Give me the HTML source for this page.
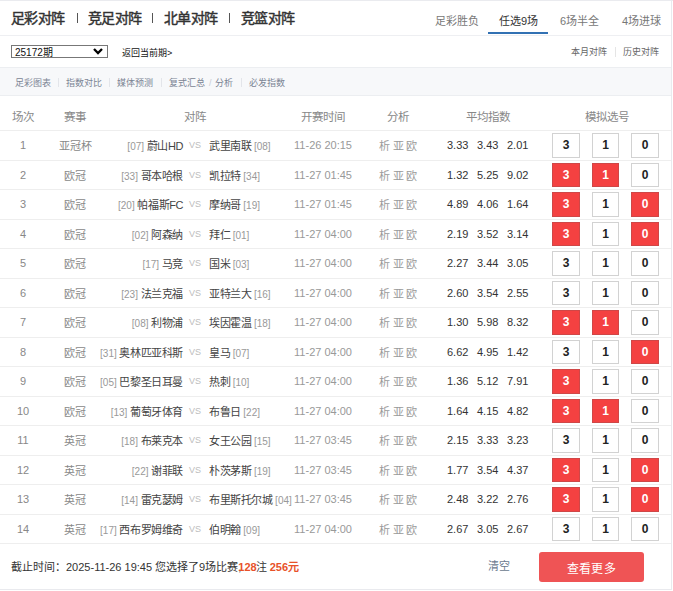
<!DOCTYPE html><html lang="zh-CN"><head><meta charset="utf-8"><style>
*{margin:0;padding:0;box-sizing:border-box}
html,body{width:673px;height:591px;overflow:hidden;background:#fff}
body{position:relative;font-family:"Liberation Sans",sans-serif;color:#333}
.a{position:absolute;white-space:nowrap}
.hl{position:absolute;left:0;width:672px;height:1px;background:#eeeeee}
.nav{font-size:14px;font-weight:normal;letter-spacing:-0.6px;-webkit-text-stroke:0.45px #333;color:#333;top:9px;line-height:18px}
.sep{position:absolute;width:1px;background:#555}
.tab{font-size:11px;color:#666;top:14px;line-height:14px}
.sub{font-size:9px;color:#7b8494;top:76.5px;line-height:13px}
.ss{position:absolute;top:78px;width:1px;height:9px;background:#e3e5ea}
.th{font-size:11.5px;color:#888;top:109.5px;line-height:15px;text-align:center;width:80px}
.c{text-align:center}
.td{font-size:11px;color:#888;line-height:14px}
.team{font-size:11px;letter-spacing:-0.4px;color:#444;line-height:14px}
.rk{font-size:10px;color:#999;letter-spacing:0}
.vs{font-size:9px;color:#bdbdbd;line-height:14px}
.tm{font-size:11px;color:#999;line-height:14px}
.xy{font-size:11px;color:#999;line-height:14px;letter-spacing:2.6px}
.od{font-size:11px;color:#333;line-height:14px}
.bx{position:absolute;border:1px solid #d2d2d2;background:#fff;font-size:12px;font-weight:bold;color:#222;text-align:center}
.bx.on{background:#f44141;border-color:#cf4747;color:#fff}
</style></head><body>
<div class="a" style="left:0;top:0;width:673px;height:1px;background:#eaebef"></div>
<div class="a nav" style="left:11px">足彩对阵</div>
<div class="a nav" style="left:88px">竞足对阵</div>
<div class="a nav" style="left:164px">北单对阵</div>
<div class="a nav" style="left:241px">竞篮对阵</div>
<div class="sep" style="left:77px;top:13px;height:10px"></div>
<div class="sep" style="left:152px;top:13px;height:10px"></div>
<div class="sep" style="left:229px;top:13px;height:10px"></div>
<div class="a tab" style="left:435px;color:#777">足彩胜负</div>
<div class="a tab" style="left:499px;color:#333">任选9场</div>
<div class="a tab" style="left:560px;color:#777">6场半全</div>
<div class="a tab" style="left:622px;color:#777">4场进球</div>
<div class="a" style="left:488px;top:32px;width:60px;height:2px;background:#3271b3"></div>
<div class="hl" style="top:35px;background:#eeeff2"></div>
<div class="a" style="left:11px;top:45px;width:97px;height:13px;border:1px solid #777;background:#fff"></div>
<div class="a" style="left:15px;top:45.5px;font-size:10px;line-height:13px;color:#111">25172期</div>
<svg class="a" style="left:93px;top:48px" width="10" height="7" viewBox="0 0 10 7"><path d="M1 1 L5 5 L9 1" fill="none" stroke="#000" stroke-width="2.3"/></svg>
<div class="a" style="left:122px;top:47px;font-size:9px;line-height:13px;color:#111">返回当前期&gt;</div>
<div class="a" style="left:571px;top:46px;font-size:9px;line-height:13px;color:#666">本月对阵</div>
<div class="a" style="left:615px;top:47px;width:1px;height:10px;background:#e5e5e5"></div>
<div class="a" style="left:623px;top:46px;font-size:9px;line-height:13px;color:#666">历史对阵</div>
<div class="a" style="left:0;top:67px;width:672px;height:29px;background:#f7f8fa;border-top:1px solid #eceef1;border-bottom:1px solid #eceef1"></div>
<div class="a sub" style="left:15px">足彩图表</div>
<div class="a sub" style="left:66px">指数对比</div>
<div class="a sub" style="left:117px">媒体预测</div>
<div class="a sub" style="left:169px">复式汇总</div>
<div class="a sub" style="left:215px">分析</div>
<div class="a sub" style="left:249px">必发指数</div>
<div class="ss" style="left:58px"></div>
<div class="ss" style="left:109px"></div>
<div class="ss" style="left:161px"></div>
<div class="ss" style="left:241px"></div>
<div class="a sub" style="left:209px;color:#c9cdd4">/</div>
<div class="a th" style="left:-17px">场次</div>
<div class="a th" style="left:35px">赛事</div>
<div class="a th" style="left:155px">对阵</div>
<div class="a th" style="left:283px">开赛时间</div>
<div class="a th" style="left:358px">分析</div>
<div class="a th" style="left:447.5px">平均指数</div>
<div class="a th" style="left:566.5px">模拟选号</div>
<div class="hl" style="top:130px"></div>
<div class="a td c" style="left:3px;width:40px;top:138.0px">1</div>
<div class="a td c" style="left:35px;width:80px;top:139.0px">亚冠杯</div>
<div class="a team" style="right:490px;top:139.0px;text-align:right"><span class="rk">[07]</span> 蔚山HD</div>
<div class="a vs c" style="left:185px;width:20px;top:138.0px">VS</div>
<div class="a team" style="left:209px;top:139.0px">武里南联<span class="rk" style="margin-left:2.5px">[08]</span></div>
<div class="a tm c" style="left:283px;width:80px;top:138.0px">11-26 20:15</div>
<div class="a xy" style="left:379px;top:139.0px">析亚欧</div>
<div class="a od" style="left:447px;top:138.0px">3.33</div>
<div class="a od" style="left:477px;top:138.0px">3.43</div>
<div class="a od" style="left:507px;top:138.0px">2.01</div>
<div class="bx" style="left:552px;top:133px;width:28px;height:25px;line-height:23px">3</div>
<div class="bx" style="left:592px;top:133px;width:27px;height:25px;line-height:23px">1</div>
<div class="bx" style="left:631px;top:133px;width:28px;height:25px;line-height:23px">0</div>
<div class="hl" style="top:160px"></div>
<div class="a td c" style="left:3px;width:40px;top:167.5px">2</div>
<div class="a td c" style="left:35px;width:80px;top:168.5px">欧冠</div>
<div class="a team" style="right:490px;top:168.5px;text-align:right"><span class="rk">[33]</span> 哥本哈根</div>
<div class="a vs c" style="left:185px;width:20px;top:167.5px">VS</div>
<div class="a team" style="left:209px;top:168.5px">凯拉特<span class="rk" style="margin-left:2.5px">[34]</span></div>
<div class="a tm c" style="left:283px;width:80px;top:167.5px">11-27 01:45</div>
<div class="a xy" style="left:379px;top:168.5px">析亚欧</div>
<div class="a od" style="left:447px;top:167.5px">1.32</div>
<div class="a od" style="left:477px;top:167.5px">5.25</div>
<div class="a od" style="left:507px;top:167.5px">9.02</div>
<div class="bx on" style="left:552px;top:163px;width:28px;height:24px;line-height:22px">3</div>
<div class="bx on" style="left:592px;top:163px;width:27px;height:24px;line-height:22px">1</div>
<div class="bx" style="left:631px;top:163px;width:28px;height:24px;line-height:22px">0</div>
<div class="hl" style="top:189px"></div>
<div class="a td c" style="left:3px;width:40px;top:197.0px">3</div>
<div class="a td c" style="left:35px;width:80px;top:198.0px">欧冠</div>
<div class="a team" style="right:490px;top:198.0px;text-align:right"><span class="rk">[20]</span> 帕福斯FC</div>
<div class="a vs c" style="left:185px;width:20px;top:197.0px">VS</div>
<div class="a team" style="left:209px;top:198.0px">摩纳哥<span class="rk" style="margin-left:2.5px">[19]</span></div>
<div class="a tm c" style="left:283px;width:80px;top:197.0px">11-27 01:45</div>
<div class="a xy" style="left:379px;top:198.0px">析亚欧</div>
<div class="a od" style="left:447px;top:197.0px">4.89</div>
<div class="a od" style="left:477px;top:197.0px">4.06</div>
<div class="a od" style="left:507px;top:197.0px">1.64</div>
<div class="bx on" style="left:552px;top:192px;width:28px;height:25px;line-height:23px">3</div>
<div class="bx" style="left:592px;top:192px;width:27px;height:25px;line-height:23px">1</div>
<div class="bx on" style="left:631px;top:192px;width:28px;height:25px;line-height:23px">0</div>
<div class="hl" style="top:219px"></div>
<div class="a td c" style="left:3px;width:40px;top:226.5px">4</div>
<div class="a td c" style="left:35px;width:80px;top:227.5px">欧冠</div>
<div class="a team" style="right:490px;top:227.5px;text-align:right"><span class="rk">[02]</span> 阿森纳</div>
<div class="a vs c" style="left:185px;width:20px;top:226.5px">VS</div>
<div class="a team" style="left:209px;top:227.5px">拜仁<span class="rk" style="margin-left:2.5px">[01]</span></div>
<div class="a tm c" style="left:283px;width:80px;top:226.5px">11-27 04:00</div>
<div class="a xy" style="left:379px;top:227.5px">析亚欧</div>
<div class="a od" style="left:447px;top:226.5px">2.19</div>
<div class="a od" style="left:477px;top:226.5px">3.52</div>
<div class="a od" style="left:507px;top:226.5px">3.14</div>
<div class="bx on" style="left:552px;top:222px;width:28px;height:24px;line-height:22px">3</div>
<div class="bx" style="left:592px;top:222px;width:27px;height:24px;line-height:22px">1</div>
<div class="bx on" style="left:631px;top:222px;width:28px;height:24px;line-height:22px">0</div>
<div class="hl" style="top:248px"></div>
<div class="a td c" style="left:3px;width:40px;top:256.0px">5</div>
<div class="a td c" style="left:35px;width:80px;top:257.0px">欧冠</div>
<div class="a team" style="right:490px;top:257.0px;text-align:right"><span class="rk">[17]</span> 马竞</div>
<div class="a vs c" style="left:185px;width:20px;top:256.0px">VS</div>
<div class="a team" style="left:209px;top:257.0px">国米<span class="rk" style="margin-left:2.5px">[03]</span></div>
<div class="a tm c" style="left:283px;width:80px;top:256.0px">11-27 04:00</div>
<div class="a xy" style="left:379px;top:257.0px">析亚欧</div>
<div class="a od" style="left:447px;top:256.0px">2.27</div>
<div class="a od" style="left:477px;top:256.0px">3.44</div>
<div class="a od" style="left:507px;top:256.0px">3.05</div>
<div class="bx" style="left:552px;top:251px;width:28px;height:25px;line-height:23px">3</div>
<div class="bx" style="left:592px;top:251px;width:27px;height:25px;line-height:23px">1</div>
<div class="bx" style="left:631px;top:251px;width:28px;height:25px;line-height:23px">0</div>
<div class="hl" style="top:278px"></div>
<div class="a td c" style="left:3px;width:40px;top:285.5px">6</div>
<div class="a td c" style="left:35px;width:80px;top:286.5px">欧冠</div>
<div class="a team" style="right:490px;top:286.5px;text-align:right"><span class="rk">[23]</span> 法兰克福</div>
<div class="a vs c" style="left:185px;width:20px;top:285.5px">VS</div>
<div class="a team" style="left:209px;top:286.5px">亚特兰大<span class="rk" style="margin-left:2.5px">[16]</span></div>
<div class="a tm c" style="left:283px;width:80px;top:285.5px">11-27 04:00</div>
<div class="a xy" style="left:379px;top:286.5px">析亚欧</div>
<div class="a od" style="left:447px;top:285.5px">2.60</div>
<div class="a od" style="left:477px;top:285.5px">3.54</div>
<div class="a od" style="left:507px;top:285.5px">2.55</div>
<div class="bx" style="left:552px;top:281px;width:28px;height:24px;line-height:22px">3</div>
<div class="bx" style="left:592px;top:281px;width:27px;height:24px;line-height:22px">1</div>
<div class="bx" style="left:631px;top:281px;width:28px;height:24px;line-height:22px">0</div>
<div class="hl" style="top:307px"></div>
<div class="a td c" style="left:3px;width:40px;top:315.0px">7</div>
<div class="a td c" style="left:35px;width:80px;top:316.0px">欧冠</div>
<div class="a team" style="right:490px;top:316.0px;text-align:right"><span class="rk">[08]</span> 利物浦</div>
<div class="a vs c" style="left:185px;width:20px;top:315.0px">VS</div>
<div class="a team" style="left:209px;top:316.0px">埃因霍温<span class="rk" style="margin-left:2.5px">[18]</span></div>
<div class="a tm c" style="left:283px;width:80px;top:315.0px">11-27 04:00</div>
<div class="a xy" style="left:379px;top:316.0px">析亚欧</div>
<div class="a od" style="left:447px;top:315.0px">1.30</div>
<div class="a od" style="left:477px;top:315.0px">5.98</div>
<div class="a od" style="left:507px;top:315.0px">8.32</div>
<div class="bx on" style="left:552px;top:310px;width:28px;height:25px;line-height:23px">3</div>
<div class="bx on" style="left:592px;top:310px;width:27px;height:25px;line-height:23px">1</div>
<div class="bx" style="left:631px;top:310px;width:28px;height:25px;line-height:23px">0</div>
<div class="hl" style="top:337px"></div>
<div class="a td c" style="left:3px;width:40px;top:344.5px">8</div>
<div class="a td c" style="left:35px;width:80px;top:345.5px">欧冠</div>
<div class="a team" style="right:490px;top:345.5px;text-align:right"><span class="rk">[31]</span> 奥林匹亚科斯</div>
<div class="a vs c" style="left:185px;width:20px;top:344.5px">VS</div>
<div class="a team" style="left:209px;top:345.5px">皇马<span class="rk" style="margin-left:2.5px">[07]</span></div>
<div class="a tm c" style="left:283px;width:80px;top:344.5px">11-27 04:00</div>
<div class="a xy" style="left:379px;top:345.5px">析亚欧</div>
<div class="a od" style="left:447px;top:344.5px">6.62</div>
<div class="a od" style="left:477px;top:344.5px">4.95</div>
<div class="a od" style="left:507px;top:344.5px">1.42</div>
<div class="bx" style="left:552px;top:340px;width:28px;height:24px;line-height:22px">3</div>
<div class="bx" style="left:592px;top:340px;width:27px;height:24px;line-height:22px">1</div>
<div class="bx on" style="left:631px;top:340px;width:28px;height:24px;line-height:22px">0</div>
<div class="hl" style="top:366px"></div>
<div class="a td c" style="left:3px;width:40px;top:374.0px">9</div>
<div class="a td c" style="left:35px;width:80px;top:375.0px">欧冠</div>
<div class="a team" style="right:490px;top:375.0px;text-align:right"><span class="rk">[05]</span> 巴黎圣日耳曼</div>
<div class="a vs c" style="left:185px;width:20px;top:374.0px">VS</div>
<div class="a team" style="left:209px;top:375.0px">热刺<span class="rk" style="margin-left:2.5px">[10]</span></div>
<div class="a tm c" style="left:283px;width:80px;top:374.0px">11-27 04:00</div>
<div class="a xy" style="left:379px;top:375.0px">析亚欧</div>
<div class="a od" style="left:447px;top:374.0px">1.36</div>
<div class="a od" style="left:477px;top:374.0px">5.12</div>
<div class="a od" style="left:507px;top:374.0px">7.91</div>
<div class="bx on" style="left:552px;top:369px;width:28px;height:25px;line-height:23px">3</div>
<div class="bx" style="left:592px;top:369px;width:27px;height:25px;line-height:23px">1</div>
<div class="bx" style="left:631px;top:369px;width:28px;height:25px;line-height:23px">0</div>
<div class="hl" style="top:396px"></div>
<div class="a td c" style="left:3px;width:40px;top:403.5px">10</div>
<div class="a td c" style="left:35px;width:80px;top:404.5px">欧冠</div>
<div class="a team" style="right:490px;top:404.5px;text-align:right"><span class="rk">[13]</span> 葡萄牙体育</div>
<div class="a vs c" style="left:185px;width:20px;top:403.5px">VS</div>
<div class="a team" style="left:209px;top:404.5px">布鲁日<span class="rk" style="margin-left:2.5px">[22]</span></div>
<div class="a tm c" style="left:283px;width:80px;top:403.5px">11-27 04:00</div>
<div class="a xy" style="left:379px;top:404.5px">析亚欧</div>
<div class="a od" style="left:447px;top:403.5px">1.64</div>
<div class="a od" style="left:477px;top:403.5px">4.15</div>
<div class="a od" style="left:507px;top:403.5px">4.82</div>
<div class="bx on" style="left:552px;top:399px;width:28px;height:24px;line-height:22px">3</div>
<div class="bx on" style="left:592px;top:399px;width:27px;height:24px;line-height:22px">1</div>
<div class="bx" style="left:631px;top:399px;width:28px;height:24px;line-height:22px">0</div>
<div class="hl" style="top:425px"></div>
<div class="a td c" style="left:3px;width:40px;top:433.0px">11</div>
<div class="a td c" style="left:35px;width:80px;top:434.0px">英冠</div>
<div class="a team" style="right:490px;top:434.0px;text-align:right"><span class="rk">[18]</span> 布莱克本</div>
<div class="a vs c" style="left:185px;width:20px;top:433.0px">VS</div>
<div class="a team" style="left:209px;top:434.0px">女王公园<span class="rk" style="margin-left:2.5px">[15]</span></div>
<div class="a tm c" style="left:283px;width:80px;top:433.0px">11-27 03:45</div>
<div class="a xy" style="left:379px;top:434.0px">析亚欧</div>
<div class="a od" style="left:447px;top:433.0px">2.15</div>
<div class="a od" style="left:477px;top:433.0px">3.33</div>
<div class="a od" style="left:507px;top:433.0px">3.23</div>
<div class="bx" style="left:552px;top:428px;width:28px;height:25px;line-height:23px">3</div>
<div class="bx" style="left:592px;top:428px;width:27px;height:25px;line-height:23px">1</div>
<div class="bx" style="left:631px;top:428px;width:28px;height:25px;line-height:23px">0</div>
<div class="hl" style="top:455px"></div>
<div class="a td c" style="left:3px;width:40px;top:462.5px">12</div>
<div class="a td c" style="left:35px;width:80px;top:463.5px">英冠</div>
<div class="a team" style="right:490px;top:463.5px;text-align:right"><span class="rk">[22]</span> 谢菲联</div>
<div class="a vs c" style="left:185px;width:20px;top:462.5px">VS</div>
<div class="a team" style="left:209px;top:463.5px">朴茨茅斯<span class="rk" style="margin-left:2.5px">[19]</span></div>
<div class="a tm c" style="left:283px;width:80px;top:462.5px">11-27 03:45</div>
<div class="a xy" style="left:379px;top:463.5px">析亚欧</div>
<div class="a od" style="left:447px;top:462.5px">1.77</div>
<div class="a od" style="left:477px;top:462.5px">3.54</div>
<div class="a od" style="left:507px;top:462.5px">4.37</div>
<div class="bx on" style="left:552px;top:458px;width:28px;height:24px;line-height:22px">3</div>
<div class="bx" style="left:592px;top:458px;width:27px;height:24px;line-height:22px">1</div>
<div class="bx on" style="left:631px;top:458px;width:28px;height:24px;line-height:22px">0</div>
<div class="hl" style="top:484px"></div>
<div class="a td c" style="left:3px;width:40px;top:492.0px">13</div>
<div class="a td c" style="left:35px;width:80px;top:493.0px">英冠</div>
<div class="a team" style="right:490px;top:493.0px;text-align:right"><span class="rk">[14]</span> 雷克瑟姆</div>
<div class="a vs c" style="left:185px;width:20px;top:492.0px">VS</div>
<div class="a team" style="left:209px;top:493.0px">布里斯托尔城<span class="rk" style="margin-left:2.5px">[04]</span></div>
<div class="a tm c" style="left:283px;width:80px;top:492.0px">11-27 03:45</div>
<div class="a xy" style="left:379px;top:493.0px">析亚欧</div>
<div class="a od" style="left:447px;top:492.0px">2.48</div>
<div class="a od" style="left:477px;top:492.0px">3.22</div>
<div class="a od" style="left:507px;top:492.0px">2.76</div>
<div class="bx on" style="left:552px;top:487px;width:28px;height:25px;line-height:23px">3</div>
<div class="bx" style="left:592px;top:487px;width:27px;height:25px;line-height:23px">1</div>
<div class="bx on" style="left:631px;top:487px;width:28px;height:25px;line-height:23px">0</div>
<div class="hl" style="top:514px"></div>
<div class="a td c" style="left:3px;width:40px;top:521.5px">14</div>
<div class="a td c" style="left:35px;width:80px;top:522.5px">英冠</div>
<div class="a team" style="right:490px;top:522.5px;text-align:right"><span class="rk">[17]</span> 西布罗姆维奇</div>
<div class="a vs c" style="left:185px;width:20px;top:521.5px">VS</div>
<div class="a team" style="left:209px;top:522.5px">伯明翰<span class="rk" style="margin-left:2.5px">[09]</span></div>
<div class="a tm c" style="left:283px;width:80px;top:521.5px">11-27 04:00</div>
<div class="a xy" style="left:379px;top:522.5px">析亚欧</div>
<div class="a od" style="left:447px;top:521.5px">2.67</div>
<div class="a od" style="left:477px;top:521.5px">3.05</div>
<div class="a od" style="left:507px;top:521.5px">2.67</div>
<div class="bx" style="left:552px;top:517px;width:28px;height:24px;line-height:22px">3</div>
<div class="bx" style="left:592px;top:517px;width:27px;height:24px;line-height:22px">1</div>
<div class="bx" style="left:631px;top:517px;width:28px;height:24px;line-height:22px">0</div>
<div class="hl" style="top:543px"></div>
<div class="a" style="left:11px;top:560px;font-size:11px;line-height:14px;color:#333">截止时间：2025-11-26 19:45 您选择了9场比赛,<span style="color:#e8522a;font-weight:bold;margin-left:-3px;margin-right:-1px">128</span>注 <span style="color:#e8522a;font-weight:bold">256元</span></div>
<div class="a" style="left:488px;top:559px;font-size:11px;line-height:14px;color:#6b7a8f">清空</div>
<div class="a" style="left:539px;top:552px;width:105px;height:30px;border-radius:3px;background:#ef5455;color:#fff;font-size:12px;font-weight:500;letter-spacing:0.3px;line-height:34px;text-align:center">查看更多</div>
<div class="hl" style="top:589px;background:#e9eaee"></div>
<div class="a" style="left:671px;top:0;width:1px;height:590px;background:#e9eaee"></div>
</body></html>
